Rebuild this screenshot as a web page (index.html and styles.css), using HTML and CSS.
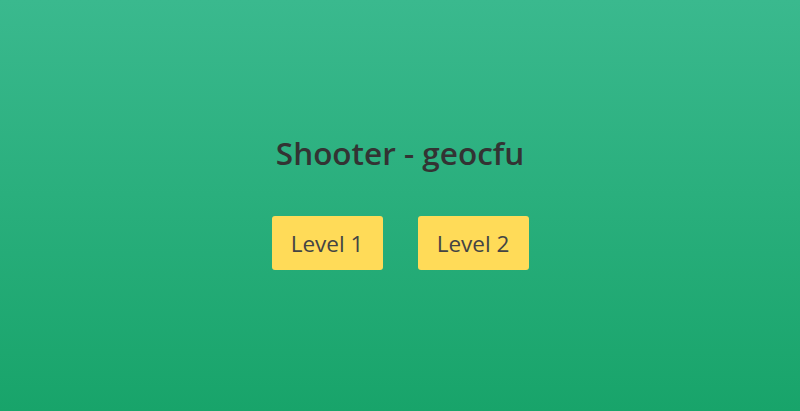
FILE: index.html
```html
<!DOCTYPE html>
<html>
<head>
<meta charset="utf-8">
<link rel="stylesheet" href="styles.css">
</head>
<body>
<main class="screen">
  <h1 class="title">Shooter - geocfu</h1>
  <div class="levels">
    <button class="level">Level 1</button>
    <button class="level">Level 2</button>
  </div>
</main>
</body>
</html>
```
FILE: styles.css
```css
html, body {
  margin: 0;
  height: 100%;
}
body {
  background: linear-gradient(to bottom, #3ab98e, #18a46a);
  font-family: "Open Sans", "Noto Sans", sans-serif;
}
.screen {
  height: 100%;
  box-sizing: border-box;
  padding-bottom: 8px;
  display: flex;
  flex-direction: column;
  align-items: center;
  justify-content: center;
}
.title {
  margin: 0 0 43px;
  font-size: 31.5px;
  font-weight: 600;
  color: #333;
  line-height: 40px;
}
.levels {
  display: flex;
  gap: 35px;
}
.level {
  width: 111px;
  height: 54px;
  border: none;
  border-radius: 3px;
  background: #ffdb58;
  color: #444;
  font-family: inherit;
  font-size: 22.5px;
  padding: 0;
}
```
